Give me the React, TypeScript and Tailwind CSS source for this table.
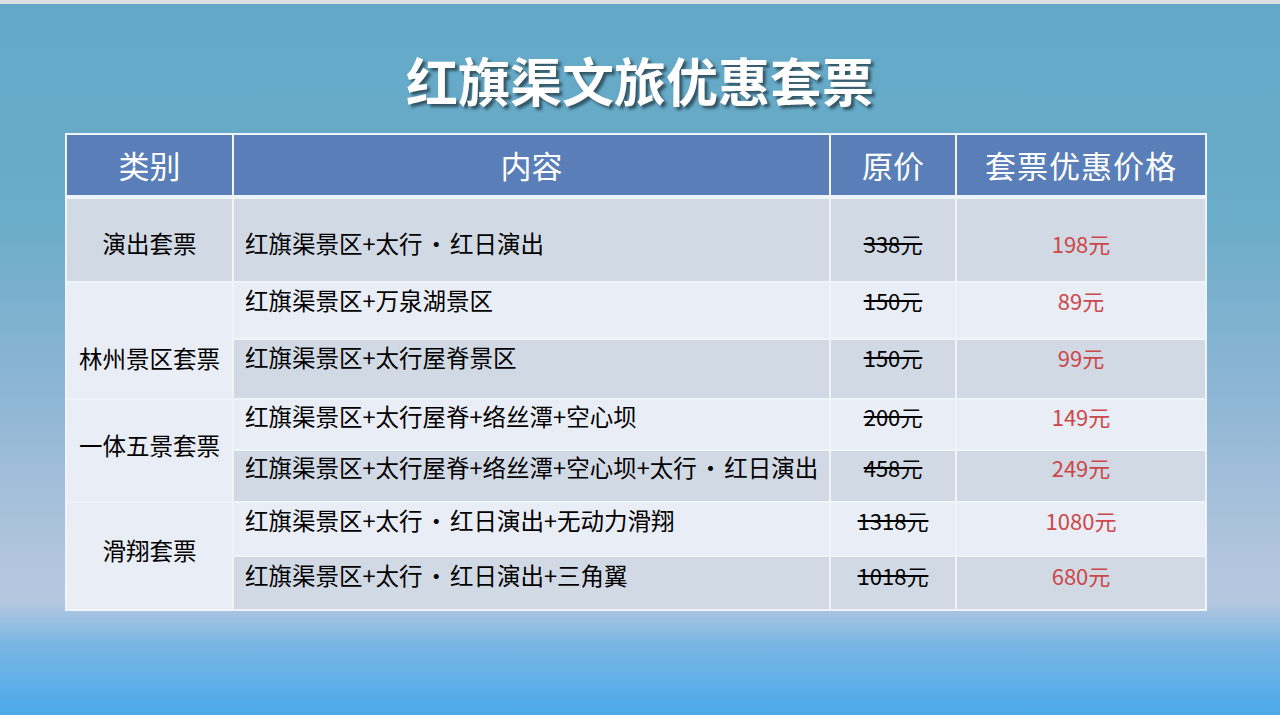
const rows = [
  { content: ["红旗渠景区+太行", "红日演出"], orig: "338元", deal: "198元", h: "h-[82px]", pt: "pt-[29px]", dark: true },
  { content: ["红旗渠景区+万泉湖景区"], orig: "150元", deal: "89元", h: "h-[55px]", pt: "pt-[2px]", dark: false },
  { content: ["红旗渠景区+太行屋脊景区"], orig: "150元", deal: "99元", h: "h-[58px]", pt: "pt-[2px]", dark: true },
  { content: ["红旗渠景区+太行屋脊+络丝潭+空心坝"], orig: "200元", deal: "149元", h: "h-[49px]", pt: "pt-[1px]", dark: false },
  { content: ["红旗渠景区+太行屋脊+络丝潭+空心坝+太行", "红日演出"], orig: "458元", deal: "249元", h: "h-[50px]", pt: "pt-[1px]", dark: true },
  { content: ["红旗渠景区+太行", "红日演出+无动力滑翔"], orig: "1318元", deal: "1080元", h: "h-[52px]", pt: "pt-[2px]", dark: false },
  { content: ["红旗渠景区+太行", "红日演出+三角翼"], orig: "1018元", deal: "680元", h: "h-[52px]", pt: "pt-[3px]", dark: true },
];

const rowStarts = ["row-start-1", "row-start-2", "row-start-3", "row-start-4", "row-start-5", "row-start-6", "row-start-7"];

const Content = ({ parts }: { parts: string[] }) => (
  <>
    {parts.map((p, i) => (
      <span key={i}>
        {i > 0 && <span className="mx-[2px]">·</span>}
        {p}
      </span>
    ))}
  </>
);

const App = () => {
  return (
    <div
      className="h-[715px] w-full overflow-hidden flex flex-col text-black"
      style={{ fontFamily: '"Noto Sans CJK SC", "Noto Sans", sans-serif' }}
    >
      <div className="h-[4px] bg-[#dde0e2]" />
      <div className="flex-1 flex flex-col items-center bg-[linear-gradient(180deg,#63a9c8_0%,#6aacc9_30%,#8eb6d4_55%,#b3c5de_79%,#b6c8e0_84%,#7ab6e4_90%,#4ba9ea_100%)]">
        <h1 className="mt-[50px] leading-[52px] text-[52px] font-bold text-white [text-shadow:3px_3px_3px_rgba(0,0,0,0.5)]">
          红旗渠文旅优惠套票
        </h1>

        <div className="self-start ml-[65px] mt-[27px] w-[1142px] bg-[#eef4f8] p-[2px]">
          {/* header */}
          <div className="grid grid-cols-[165px_595px_124px_248px] gap-x-[2px] h-[60px] text-white text-[31px]">
            <div className="bg-[#5a7fb8] flex items-center justify-center">类别</div>
            <div className="bg-[#5a7fb8] flex items-center justify-center">内容</div>
            <div className="bg-[#5a7fb8] flex items-center justify-center">原价</div>
            <div className="bg-[#5a7fb8] flex items-center justify-center tracking-[1px]">套票优惠价格</div>
          </div>

          {/* body */}
          <div className="mt-[4px] grid grid-cols-[165px_595px_124px_248px] gap-[2px] text-[23.5px] leading-[30px]">
            <div className="row-start-1 col-start-1 bg-[#d1d9e5] text-center pt-[29px]">演出套票</div>
            <div className="row-start-2 row-span-2 col-start-1 bg-[#e9edf5] text-center pt-[60px]">林州景区套票</div>
            <div className="row-start-4 row-span-2 col-start-1 bg-[#e9edf5] text-center pt-[30px]">一体五景套票</div>
            <div className="row-start-6 row-span-2 col-start-1 bg-[#e9edf5] text-center pt-[32px]">滑翔套票</div>

            {rows.map((r, i) => {
              const bg = r.dark ? "bg-[#d1d9e5]" : "bg-[#e9edf5]";
              return (
                <div key={i} className="contents">
                  <div className={`${rowStarts[i]} col-start-2 ${bg} ${r.h} ${r.pt} pl-[11px] whitespace-nowrap`}>
                    <Content parts={r.content} />
                  </div>
                  <div className={`${rowStarts[i]} col-start-3 ${bg} ${r.pt} text-center text-[22px]`}>
                    <span className="line-through decoration-black decoration-[1.5px]">{r.orig}</span>
                  </div>
                  <div className={`${rowStarts[i]} col-start-4 ${bg} ${r.pt} text-center text-[22px] text-[#cc4848]`}>
                    {r.deal}
                  </div>
                </div>
              );
            })}
          </div>
        </div>
      </div>
    </div>
  );
};

export default App;
